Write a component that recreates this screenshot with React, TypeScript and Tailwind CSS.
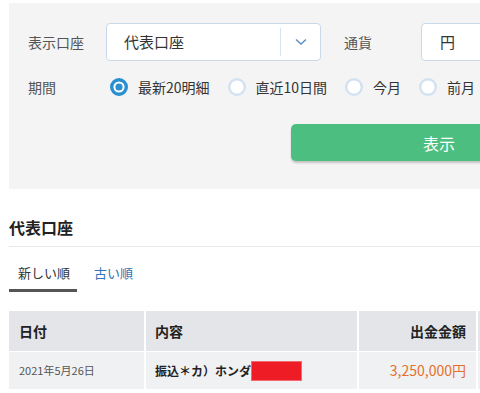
import React from "react";

const Radio = ({ checked }: { checked?: boolean }) =>
  checked ? (
    <svg width="18" height="18" viewBox="0 0 18 18">
      <circle cx="9" cy="9" r="7.3" fill="#fff" stroke="#2a8fd1" strokeWidth="3.4" />
      <circle cx="9" cy="9" r="3.6" fill="#2a8fd1" />
    </svg>
  ) : (
    <svg width="18" height="18" viewBox="0 0 18 18">
      <circle cx="9" cy="9" r="7.8" fill="#fff" stroke="#d2e2f1" strokeWidth="2.4" />
    </svg>
  );

const radios = [
  { label: "最新20明細", checked: true },
  { label: "直近10日間" },
  { label: "今月" },
  { label: "前月" },
];

export default function App() {
  return (
    <div
      className="w-[480px] h-[393px] overflow-hidden bg-white"
      style={{ fontFamily: '"Noto Sans CJK JP", "Noto Sans", sans-serif' }}
    >
      <div className="ml-[9px] mt-[3px] w-[640px] bg-[#f4f4f4] pt-[20px] pl-[19px] pb-[28px]">
        <div className="flex items-center h-[38px]">
          <div className="w-[78px] text-[14px] text-[#555]">表示口座</div>
          <div className="w-[215px] h-[38px] border border-[#c9d9ea] rounded-[4px] bg-white flex items-center">
            <div className="flex-1 pl-[17px] text-[15px] text-[#333]">代表口座</div>
            <div className="w-[40px] h-[28px] border-l border-[#d6e3f0] flex items-center justify-center">
              <svg width="12" height="8" viewBox="0 0 12 8">
                <path d="M1 1.5 L6 6 L11 1.5" fill="none" stroke="#5b8fc7" strokeWidth="1.5" />
              </svg>
            </div>
          </div>
          <div className="ml-[23px] w-[77px] text-[14px] text-[#555]">通貨</div>
          <div className="w-[160px] h-[38px] border border-[#c9d9ea] rounded-[4px] bg-white flex items-center pl-[18px] text-[15px] text-[#333]">
            円
          </div>
        </div>
        <div className="flex items-center mt-[17px] h-[18px]">
          <div className="w-[82px] text-[14px] text-[#555]">期間</div>
          <div className="flex items-center gap-[18px]">
            {radios.map((r) => (
              <div key={r.label} className="flex items-center gap-[10px]">
                <Radio checked={r.checked} />
                <span className="text-[14px] text-[#333]">{r.label}</span>
              </div>
            ))}
          </div>
        </div>
        <div className="mt-[28px] ml-[263px] w-[296px] h-[37px] rounded-[5px] bg-[#4cbf80] shadow-[0_2px_2px_rgba(0,0,0,0.2)] flex items-center justify-center text-white text-[16px]">
          表示
        </div>
      </div>

      <div className="ml-[9px] mt-[26px] w-[480px]">
        <div className="text-[16px] font-bold text-[#222] leading-[24px] pb-[7px] border-b border-[#e8e8e8]">
          代表口座
        </div>
        <div className="flex items-end">
          <div className="pl-[9px] pr-[7px] pt-[16px] pb-[6px] border-b-[3px] border-[#555] text-[13px] leading-[20px] text-[#333]">
            新しい順
          </div>
          <div className="pl-[17px] pt-[16px] pb-[9px] text-[13px] leading-[20px] text-[#3474b3]">
            古い順
          </div>
        </div>
        <div className="mt-[19px] grid grid-cols-[135px_211px_117px_40px] gap-x-[2px] gap-y-[1px] bg-white">
          <div className="h-[40px] bg-[#e4e5e8] flex items-center pl-[10px] text-[14px] font-bold text-[#222]">日付</div>
          <div className="h-[40px] bg-[#e4e5e8] flex items-center pl-[9px] text-[14px] font-bold text-[#222]">内容</div>
          <div className="h-[40px] bg-[#e4e5e8] flex items-center justify-end pr-[10px] text-[14px] font-bold text-[#222]">出金金額</div>
          <div className="h-[40px] bg-[#e4e5e8]" />
          <div className="h-[37px] bg-[#f0f1f3] flex items-center pl-[10px] text-[11px] text-[#555]">2021年5月26日</div>
          <div className="h-[37px] bg-[#f0f1f3] flex items-center pl-[9px] text-[12px] font-bold text-[#222]">
            <span>振込＊カ）ホンダ</span>
            <span className="inline-block w-[51px] h-[20px] bg-[#ee1c25] border border-[#f26a6f]" />
          </div>
          <div className="h-[37px] bg-[#f0f1f3] flex items-center justify-end pr-[10px] text-[14px] text-[#e5702a]">3,250,000円</div>
          <div className="h-[37px] bg-[#f0f1f3]" />
        </div>
      </div>
    </div>
  );
}
